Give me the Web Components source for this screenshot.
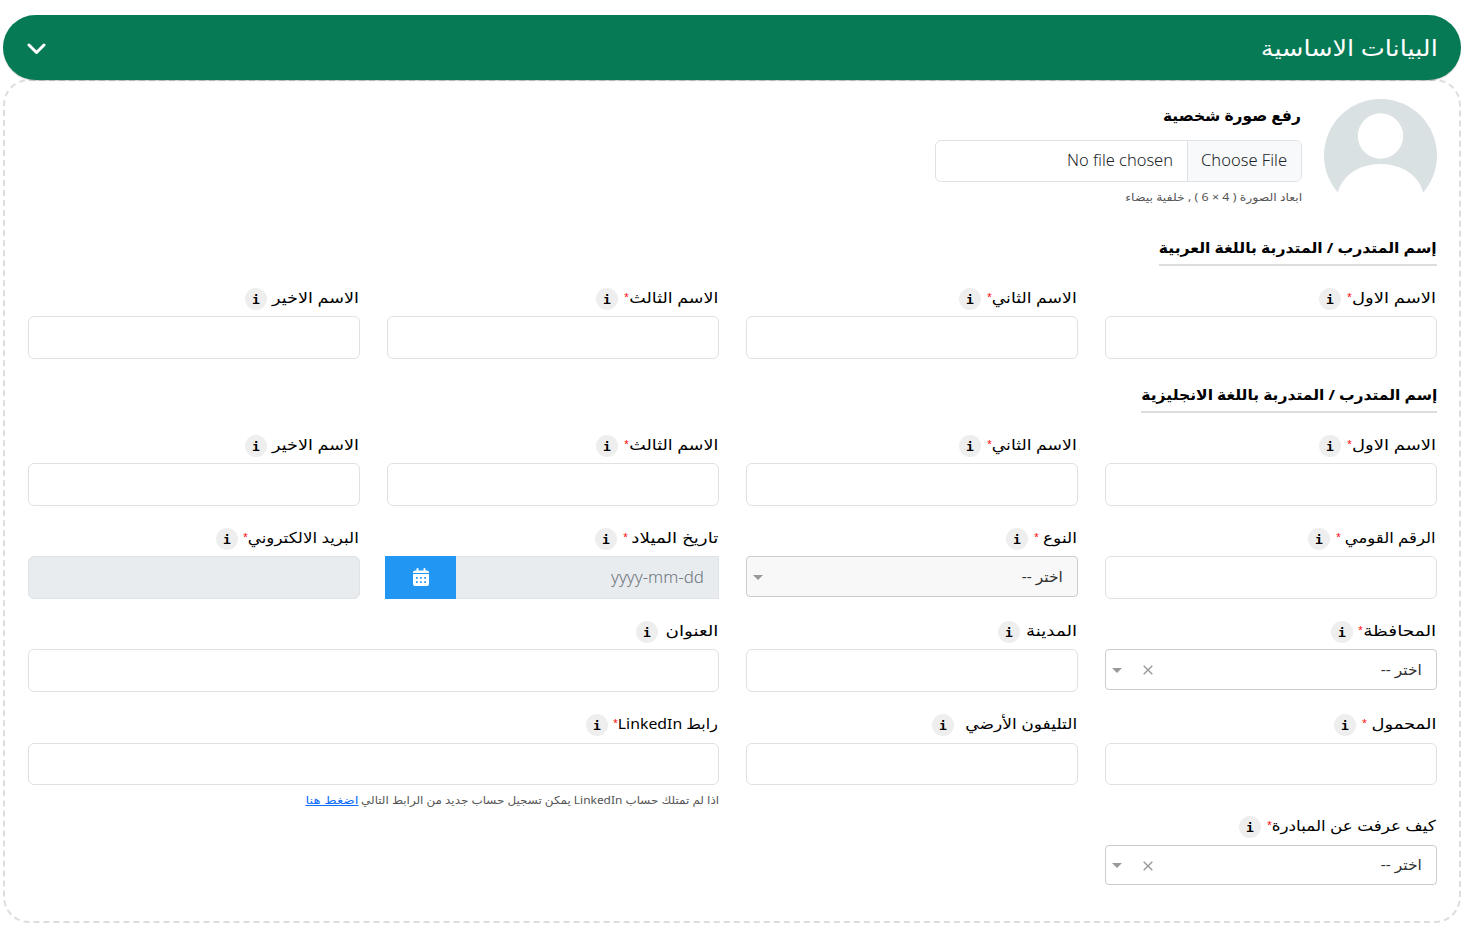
<!DOCTYPE html>
<html lang="ar" dir="rtl">
<head>
<meta charset="utf-8">
<title>البيانات الاساسية</title>
<style>
html,body{margin:0;background:#fff}
body{font-family:"Noto Sans","DejaVu Sans",sans-serif;font-size:16px;color:#000;height:929px;overflow:hidden}
</style>
</head>
<body>
<profile-form></profile-form>
<script>
function component(name, markup, ready) {
  customElements.define(name, class extends HTMLElement {
    connectedCallback() {
      if (this.shadowRoot) return;
      const root = this.attachShadow({ mode: 'open' });
      root.innerHTML = typeof markup === 'function' ? markup(this) : markup;
      if (ready) ready(this, root);
    }
  });
}

/* One line of text set to an exact measure */
component('fit-text', `<style>
:host{display:inline-block;white-space:nowrap;flex:none}
span{display:inline-block;transform-origin:100% 50%}
:host([dir="ltr"]) span{transform-origin:0 50%}
:host([underline]) span{text-decoration:underline}
</style><span><slot></slot></span>`, (el, root) => {
  const s = root.querySelector('span'), w = +el.getAttribute('w');
  el.style.width = w + 'px';
  const n = s.getBoundingClientRect().width;
  s.style.transform = 'scaleX(' + w / n + ')';
});

component('section-bar', `<style>
:host{display:flex;box-sizing:border-box;height:65px;padding:0 23px 0 24px;align-items:center;justify-content:space-between;border-radius:33px;background:#057a55;color:#fff;position:relative;box-shadow:0 1px 1px #0003;font-size:22px;line-height:34px}
::slotted(fit-text){margin-bottom:2px}
svg{display:block;margin-top:2px}
</style><slot></slot><svg width="19" height="12" viewBox="0 0 19 12" fill="none" stroke="#fff" stroke-width="3" stroke-linecap="round" stroke-linejoin="round"><path d="M2 2l7.5 7.5L17 2"/></svg>`);

component('user-avatar', `<style>:host{display:block;width:113px;height:113px;flex:none}svg{display:block}</style>
<svg width="113" height="113" viewBox="0 0 113 113"><circle cx="56.5" cy="56.5" r="56.5" fill="#dae1e2"/><circle cx="56.5" cy="37" r="22.7" fill="#fff"/><path d="M13.8 94.5C17 77 35 65 56.5 65S96 77 99.2 94.5V113H13.8z" fill="#fff"/></svg>`);

component('file-picker', `<style>
:host{display:flex;box-sizing:border-box;width:367px;height:42px;border:1px solid #dee2e6;border-radius:6px;overflow:hidden;color:#212529;font-weight:350;font-size:16px;line-height:39px}
.b{box-sizing:border-box;width:114px;background:#f8f9fa;border-left:1px solid #dee2e6;padding-right:14px}
.t{padding-right:14px}
</style><div class="b"><fit-text w="86" dir="ltr">Choose File</fit-text></div><div class="t"><fit-text w="106" dir="ltr">No file chosen</fit-text></div>`);

component('group-title', el => `<style>
:host{display:block;width:max-content;border-bottom:2px solid #ddd;height:28px;line-height:22px;font-weight:700;font-size:15px}
</style><fit-text w="${el.getAttribute('w')}"><slot></slot></fit-text>`);

component('info-dot', `<style>
:host{display:flex;width:22px;height:22px;border-radius:50%;background:#eee;align-items:center;justify-content:center;flex:none}
b{font:700 13px/22px "DejaVu Sans Mono",monospace;padding-top:1px}
</style><b>i</b>`);

component('form-field', el => {
  const star = el.getAttribute('star'), gap = el.getAttribute('gap') || 6;
  return `<style>
:host{display:block;min-width:0}
:host([span="2"]){grid-column:span 2}
.l{display:flex;height:22px;line-height:18px;padding-right:1px;margin-bottom:6px;font-size:15px;font-weight:400}
.s{width:5px;flex:none;color:#f00;font-size:9px;line-height:18px;margin-right:${star || 0}px}
info-dot{margin-right:${gap}px}
</style><div class="l"><fit-text w="${el.getAttribute('w')}">${el.getAttribute('label')}</fit-text>${star !== null ? '<span class="s">*</span>' : ''}<info-dot></info-dot></div><slot></slot>`;
});

component('text-box', `<style>
:host{display:block}
input{display:block;box-sizing:border-box;width:100%;height:var(--h,43px);border:1px solid #dee2e6;border-radius:6px;background:#fff;margin:0;padding:6px 14px;font:inherit}
:host([disabled]) input{background:#e9ecef}
</style><input>`, (el, root) => { root.querySelector('input').disabled = el.hasAttribute('disabled'); });

component('select-box', el => `<style>
:host{display:flex;box-sizing:border-box;height:var(--h,41px);border:1px solid #ccc;border-radius:4px;background:#fff;align-items:center;padding:0 14px 0 6px;color:#333;font-size:15px}
:host([muted]){background:#f8f8f8}
fit-text{line-height:24px;margin-left:auto;margin-bottom:2px}
svg{display:block;margin-top:1px}
.x{margin-left:21px}
</style><fit-text w="41">اختر --</fit-text>${el.hasAttribute('muted') ? '' : '<svg class="x" width="10" height="10" viewBox="0 0 10 10" stroke="#999" stroke-width="1.4"><path d="M.7.7l8.6 8.6M9.3.7L.7 9.3"/></svg>'}<svg width="10" height="5" viewBox="0 0 10 5"><path d="M0 0h10L5 5z" fill="#999"/></svg>`);

component('date-box', `<style>
:host{display:flex;height:43px;margin-left:-2px}
.v{flex:1;box-sizing:border-box;border:1px solid #dee2e6;border-left:0;background:#e9ecef;color:#6c757d;font-weight:350;font-size:16px;line-height:41px;padding-right:14px}
.c{width:71px;background:#2196f3;display:flex;align-items:center;justify-content:center}
svg{margin-bottom:2px}
</style><div class="v"><fit-text w="93" dir="ltr">yyyy-mm-dd</fit-text></div><div class="c"><svg width="16" height="18" viewBox="0 0 16 18"><path d="M4.5 1v3M11.5 1v3" stroke="#fff" stroke-width="2" stroke-linecap="round"/><path d="M0 5V4.5a2 2 0 0 1 2-2h12a2 2 0 0 1 2 2V5z" fill="#fff"/><path d="M0 6h16V16a2 2 0 0 1-2 2H2a2 2 0 0 1-2-2z" fill="#fff"/><path d="M3 9h1.7v1.7H3zM7.1 9h1.7v1.7H7.1zM11.2 9h1.7v1.7h-1.7zM3 13.2h1.7v1.7H3zM7.1 13.2h1.7v1.7H7.1zM11.2 13.2h1.7v1.7h-1.7z" fill="#2196f3"/></svg></div>`);

component('field-row', `<style>
:host{display:grid;grid-template-columns:repeat(4,332px);column-gap:27px;align-items:start}
</style><slot></slot>`);

const names = `
<form-field label="الاسم الاول" w="84" star="0"><text-box></text-box></form-field>
<form-field label="الاسم الثاني" w="85" star="0"><text-box></text-box></form-field>
<form-field label="الاسم الثالث" w="89" star="0"><text-box></text-box></form-field>
<form-field label="الاسم الاخير" w="87" gap="5"><text-box></text-box></form-field>`;

component('profile-form', `<style>
:host{display:block;padding:15px 8px 0 3px}
.panel{box-sizing:border-box;height:844px;margin-top:-1px;border:2px dashed #ddd;border-radius:26px;padding:18px 22px 0 23px}
.up{display:flex;gap:22px;height:113px}
.col{display:flex;flex-direction:column;align-items:flex-start}
.h{font-weight:700;font-size:15.5px;line-height:22px;margin:5px 1px 14px 0}
.n{font-size:11px;line-height:16px;color:#555;margin-top:7px}
field-row{margin-bottom:22px}
group-title{margin-bottom:22px}
.g1,.g2{margin-top:24px}
.low{--h:42px}
.low text-box,.last select-box{margin-top:7px}
.last{margin-top:-14px}
.last select-box{--h:40px}
.note{display:flex;gap:3px;font-size:11px;line-height:16px;color:#555;margin-top:7px}
.note a{color:#0d6efd}
</style>
<section-bar><fit-text w="177">البيانات الاساسية</fit-text></section-bar>
<div class="panel">
<div class="up"><user-avatar></user-avatar><div class="col">
<div class="h"><fit-text w="138">رفع صورة شخصية</fit-text></div>
<file-picker></file-picker>
<div class="n"><fit-text w="177">ابعاد الصورة ( 4 × 6 ) , خلفية بيضاء</fit-text></div></div></div>
<group-title class="g1" w="278">إسم المتدرب / المتدربة باللغة العربية</group-title>
<field-row>${names}</field-row>
<group-title class="g2" w="296">إسم المتدرب / المتدربة باللغة الانجليزية</group-title>
<field-row>${names}</field-row>
<field-row>
<form-field label="الرقم القومي" w="91" star="4"><text-box></text-box></form-field>
<form-field label="النوع" w="34" star="4"><select-box muted></select-box></form-field>
<form-field label="تاريخ الميلاد" w="87" star="3"><date-box></date-box></form-field>
<form-field label="البريد الالكتروني" w="111" star="0" gap="5"><text-box disabled></text-box></form-field>
</field-row>
<field-row>
<form-field label="المحافظة" w="73" star="0" gap="5"><select-box></select-box></form-field>
<form-field label="المدينة" w="51"><text-box></text-box></form-field>
<form-field label="العنوان" w="53" gap="7" span="2"><text-box></text-box></form-field>
</field-row>
<field-row class="low">
<form-field label="المحمول" w="65" star="4"><text-box></text-box></form-field>
<form-field label="التليفون الأرضي" w="112" gap="11"><text-box></text-box></form-field>
<form-field label="رابط LinkedIn" w="100" star="0" gap="5" span="2"><text-box></text-box>
<div class="note"><fit-text w="358">اذا لم تمتلك حساب LinkedIn يمكن تسجيل حساب جديد من الرابط التالي</fit-text><a><fit-text w="53" underline>اضغط هنا</fit-text></a></div></form-field>
</field-row>
<field-row class="last">
<form-field label="كيف عرفت عن المبادرة" w="164" star="0"><select-box></select-box></form-field>
</field-row>
</div>`);
</script>
</body>
</html>
